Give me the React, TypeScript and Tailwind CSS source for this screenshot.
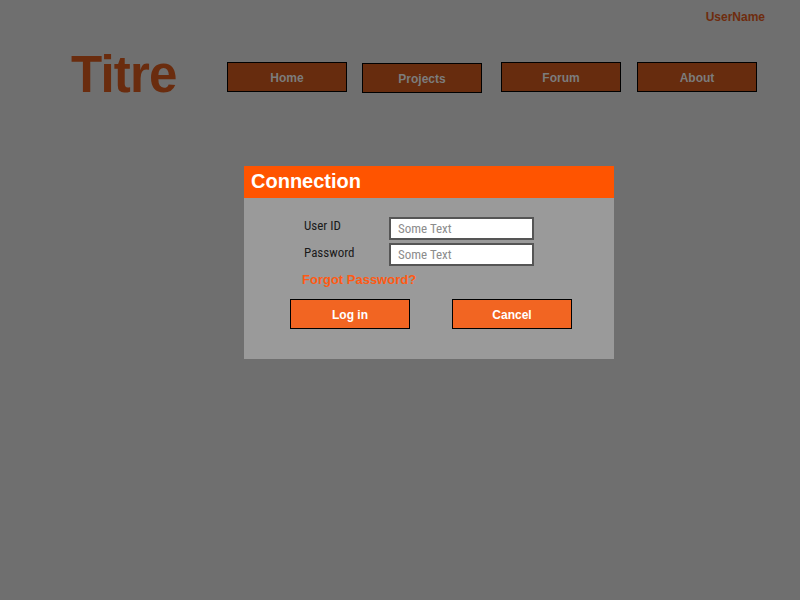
import React from "react";

const navItems = [
  { label: "Home", cls: "ml-0 mt-[14px]" },
  { label: "Projects", cls: "ml-[15px] mt-[15px]" },
  { label: "Forum", cls: "ml-[19px] mt-[14px]" },
  { label: "About", cls: "ml-[16px] mt-[14px]" },
];

export default function App() {
  return (
    <div className="w-[800px] h-[600px] bg-[#6f6f6f] font-['Liberation_Sans',Arial,sans-serif] overflow-hidden">
      <div className="flex justify-end pr-[35px] pt-[10px]">
        <span className="text-[12px] leading-[14px] font-bold text-[#6e2c0e]">UserName</span>
      </div>
      <div className="flex items-start mt-[24px]">
        <div className="ml-[71px] w-[156px] pt-[1px] text-[51px] leading-none font-bold tracking-[-0.8px] text-[#6a2c0e]">
          Titre
        </div>
        {navItems.map((n) => (
          <button
            key={n.label}
            className={`${n.cls} w-[120px] h-[30px] pt-[2px] border border-black bg-[#672c0e] text-[12px] leading-[14px] font-bold text-[#7c7c7c]`}
          >
            {n.label}
          </button>
        ))}
      </div>
      <div className="ml-[244px] mt-[66px] w-[370px]">
        <div className="h-[32px] bg-[#ff5400] pl-[7px] text-[20px] leading-[30px] font-bold text-white">
          Connection
        </div>
        <div className="bg-[#9a9a9a] pt-[19px] pb-[30px]">
          <div className="flex flex-col gap-[3px] pl-[60px]">
            <div className="flex items-start h-[23px]">
              <label className="w-[85px] pt-[1px] text-[13px] leading-[16px] text-[#1a1a1a] font-['Liberation_Sans_Narrow','Roboto_Condensed',sans-serif]">
                User ID
              </label>
              <input
                placeholder="Some Text"
                className="w-[145px] h-[23px] border-2 border-[#555555] bg-white px-[7px] text-[13px] text-[#333] placeholder:text-[#8c8c8c] outline-none font-['Liberation_Sans_Narrow','Roboto_Condensed',sans-serif]"
              />
            </div>
            <div className="flex items-start h-[23px]">
              <label className="w-[85px] pt-[2px] text-[13px] leading-[16px] text-[#1a1a1a] font-['Liberation_Sans_Narrow','Roboto_Condensed',sans-serif]">
                Password
              </label>
              <input
                placeholder="Some Text"
                className="w-[145px] h-[23px] border-2 border-[#555555] bg-white px-[7px] text-[13px] text-[#333] placeholder:text-[#8c8c8c] outline-none font-['Liberation_Sans_Narrow','Roboto_Condensed',sans-serif]"
              />
            </div>
            <div className="-ml-[2px] mt-[3px] text-[13px] leading-[16px] font-bold text-[#ff5a14]">
              Forgot Password?
            </div>
          </div>
          <div className="flex pl-[46px] gap-[42px] mt-[11px]">
            <button className="w-[120px] h-[30px] pt-[2px] border border-black bg-[#f26522] text-[12px] leading-[14px] font-bold text-white">
              Log in
            </button>
            <button className="w-[120px] h-[30px] pt-[2px] border border-black bg-[#f26522] text-[12px] leading-[14px] font-bold text-white">
              Cancel
            </button>
          </div>
        </div>
      </div>
    </div>
  );
}
